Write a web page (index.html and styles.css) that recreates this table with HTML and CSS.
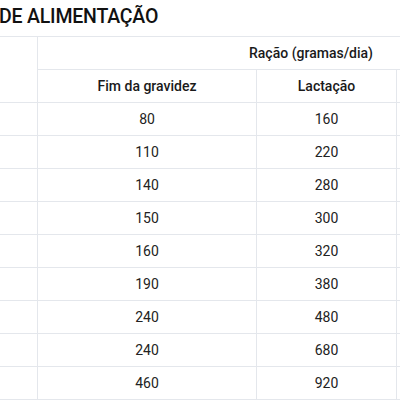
FILE: index.html
```html
<!DOCTYPE html>
<html lang="pt">
<head>
<meta charset="utf-8">
<link rel="stylesheet" href="styles.css">
</head>
<body>
<div class="page">
  <h2 class="title">DE ALIMENTAÇÃO</h2>
  <table class="feed">
    <colgroup>
      <col class="c0"><col class="c1"><col class="c2"><col class="c3">
    </colgroup>
    <thead>
      <tr>
        <th rowspan="2"></th>
        <th colspan="3">Ração (gramas/dia)</th>
      </tr>
      <tr>
        <th>Fim da gravidez</th>
        <th>Lactação</th>
        <th></th>
      </tr>
    </thead>
    <tbody>
      <tr><td></td><td>80</td><td>160</td><td></td></tr>
      <tr><td></td><td>110</td><td>220</td><td></td></tr>
      <tr><td></td><td>140</td><td>280</td><td></td></tr>
      <tr><td></td><td>150</td><td>300</td><td></td></tr>
      <tr><td></td><td>160</td><td>320</td><td></td></tr>
      <tr><td></td><td>190</td><td>380</td><td></td></tr>
      <tr><td></td><td>240</td><td>480</td><td></td></tr>
      <tr><td></td><td>240</td><td>680</td><td></td></tr>
      <tr><td></td><td>460</td><td>920</td><td></td></tr>
    </tbody>
  </table>
</div>
</body>
</html>
```
FILE: styles.css
```css
html, body {
  margin: 0;
  padding: 0;
  background: #ffffff;
  overflow: hidden;
}
.page {
  width: 400px;
  height: 400px;
  overflow: hidden;
  font-family: Roboto, "Liberation Sans", sans-serif;
  color: #1f1f1f;
}
.title {
  margin: 0 0 0 -1px;
  padding: 3px 0 5px;
  font-size: 19.5px;
  line-height: 28px;
  font-weight: 500;
  letter-spacing: -0.2px;
  color: #111111;
  white-space: nowrap;
}
.feed {
  border-collapse: collapse;
  table-layout: fixed;
  margin-left: -100px;
  width: 684px;
  font-size: 14px;
}
.c0 { width: 137px; }
.c1 { width: 219px; }
.c2 { width: 140px; }
.c3 { width: 188px; }
.feed th,
.feed td {
  height: 32px;
  padding: 0;
  border: 1px solid #e4e7ec;
  text-align: center;
  vertical-align: middle;
  line-height: 20px;
}
.feed th {
  font-weight: 500;
  color: #1a1a1a;
}
.feed td {
  font-weight: 400;
  color: #222222;
}
```
